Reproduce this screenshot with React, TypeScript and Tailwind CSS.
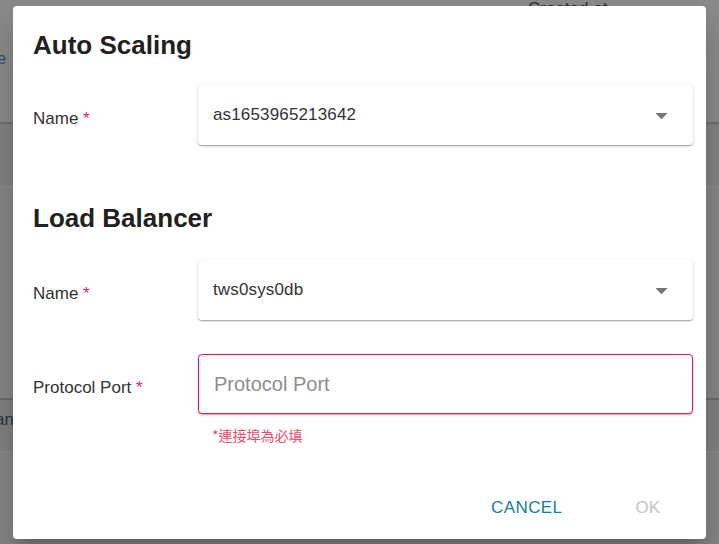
import React from "react";

const font = { fontFamily: '"Liberation Sans", Arial, "Noto Sans CJK TC", sans-serif' };

function Caret() {
  return (
    <svg width="29" height="29" viewBox="0 0 24 24" className="shrink-0">
      <path d="M7 10l5 5 5-5z" fill="#757575" />
    </svg>
  );
}

function SelectBox({ value }: { value: string }) {
  return (
    <div className="flex h-[60px] flex-1 items-center justify-between rounded-[4px] bg-white pl-[15px] pr-[17px] shadow-[0_1px_3px_rgba(0,0,0,0.2),0_1px_1px_rgba(0,0,0,0.14),0_2px_1px_-1px_rgba(0,0,0,0.12)]">
      <span className="text-[17px] leading-[20px] tracking-[0.15px] text-[#333]">{value}</span>
      <Caret />
    </div>
  );
}

function Label({ text }: { text: string }) {
  return (
    <div className="w-[165px] shrink-0 pt-[24px] text-[17px] leading-[20px] text-[#333]">
      {text} <span className="text-[#e91e63]">*</span>
    </div>
  );
}

export default function App() {
  return (
    <div className="relative h-[544px] w-[719px] overflow-hidden bg-[#838383]" style={font}>
      {/* page behind the modal backdrop */}
      <div className="flex h-full flex-col">
        <div className="relative h-[122px] bg-[#898989]">
          <span className="absolute left-[528px] top-[-4px] text-[17px] text-[#2a2a2a]">Created at</span>
          <span className="absolute left-[-9px] top-[46px] text-[17px] text-[#1b4f7a]">re</span>
        </div>
        <div className="h-[2px] bg-[#6f6f6f]" />
        <div className="h-[62px] bg-[#818181]" />
        <div className="h-[212px] border-t border-[#8c8c8c] bg-[#858585]" />
        <div className="h-[2px] bg-[#6b6b6b]" />
        <div className="relative h-[51px] bg-[#7f7f7f]">
          <span className="absolute left-[-5px] top-[7px] text-[17px] text-[#1f3447]">an</span>
        </div>
        <div className="flex-1 border-t border-[#8c8c8c] bg-[#848484]" />
      </div>

      {/* dialog */}
      <div className="absolute left-[13px] top-[6px] flex h-[533px] w-[693px] flex-col rounded-[4px] bg-white pl-[20px] pr-[13px] shadow-[0_11px_15px_-7px_rgba(0,0,0,0.2),0_24px_38px_3px_rgba(0,0,0,0.14)]">
        <h2 className="mt-[24px] text-[26px] font-bold leading-[31px] text-[#212121]">Auto Scaling</h2>
        <div className="mt-[24px] flex items-start">
          <Label text="Name" />
          <SelectBox value="as1653965213642" />
        </div>

        <h2 className="mt-[58px] text-[26px] font-bold leading-[31px] text-[#212121]">Load Balancer</h2>
        <div className="mt-[26px] flex items-start">
          <Label text="Name" />
          <SelectBox value="tws0sys0db" />
        </div>

        <div className="mt-[34px] flex items-start">
          <Label text="Protocol Port" />
          <div className="flex flex-1 flex-col">
            <input
              placeholder="Protocol Port"
              className="h-[60px] w-full rounded-[4px] border border-[#f0135f] bg-white px-[15px] text-[20px] text-[#333] shadow-[0_1px_3px_rgba(0,0,0,0.2),0_1px_1px_rgba(0,0,0,0.14)] outline-none placeholder:text-[#8e8e8e]"
              style={font}
            />
            <div
              className="mt-[13px] pl-[14px] text-[14px] leading-[16px] text-[#f2476a]"
              style={{ fontFamily: '"Noto Sans CJK TC", "Liberation Sans", sans-serif' }}
            >
              *連接埠為必填
            </div>
          </div>
        </div>

        <div className="mt-auto mb-[21px] flex justify-end gap-[73px] pr-[33px]">
          <button className="text-[17px] leading-[20px] tracking-[0.4px] text-[#137f99]">CANCEL</button>
          <button className="text-[17px] leading-[20px] text-[#c4c4c4]">OK</button>
        </div>
      </div>
    </div>
  );
}
